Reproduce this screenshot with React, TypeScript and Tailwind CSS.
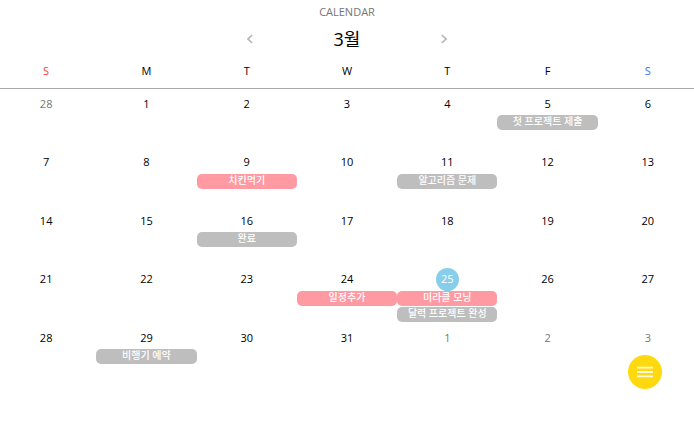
type Tone = "pink" | "gray";

interface Day {
  date: number;
  outside?: boolean;
  today?: boolean;
  events?: { title: string; tone: Tone }[];
}

const weekdays = [
  { label: "S", name: "Sunday", color: "text-[#ff3b3b]" },
  { label: "M", name: "Monday", color: "text-black" },
  { label: "T", name: "Tuesday", color: "text-black" },
  { label: "W", name: "Wednesday", color: "text-black" },
  { label: "T", name: "Thursday", color: "text-black" },
  { label: "F", name: "Friday", color: "text-black" },
  { label: "S", name: "Saturday", color: "text-[#3b6dff]" },
];

const events: Record<number, Day["events"]> = {
  5: [{ title: "첫 프로젝트 제출", tone: "gray" }],
  9: [{ title: "치킨먹기", tone: "pink" }],
  11: [{ title: "알고리즘 문제", tone: "gray" }],
  16: [{ title: "완료", tone: "gray" }],
  24: [{ title: "일정추가", tone: "pink" }],
  25: [
    { title: "미라클 모닝", tone: "pink" },
    { title: "달력 프로젝트 완성", tone: "gray" },
  ],
  29: [{ title: "비행기 예약", tone: "gray" }],
};

const days: Day[] = [
  { date: 28, outside: true },
  ...Array.from({ length: 31 }, (_, i) => ({
    date: i + 1,
    today: i + 1 === 25,
    events: events[i + 1],
  })),
  { date: 1, outside: true },
  { date: 2, outside: true },
  { date: 3, outside: true },
];

const tones: Record<Tone, string> = {
  pink: "bg-[#ff99a2]",
  gray: "bg-[#bebebe]",
};

function Chevron({ d }: { d: string }) {
  return (
    <svg viewBox="0 0 6 10" className="h-[10px] w-[6px]" fill="none" stroke="#b4b4b4" strokeWidth="1.6">
      <path d={d} />
    </svg>
  );
}

function DayCell({ day }: { day: Day }) {
  const color = day.today
    ? "bg-[#87ceeb] text-white"
    : day.outside
      ? "text-[#757575]"
      : "text-black";
  return (
    <div className="flex min-w-0 flex-col items-center">
      <span className={`flex size-[23px] shrink-0 items-center justify-center rounded-full ${color}`}>
        {day.date}
      </span>
      <div className="flex w-full flex-col gap-px">
        {day.events?.map((event) => (
          <button
            key={event.title}
            type="button"
            className={`h-[15px] w-full rounded-[5px] text-center text-[10px] leading-[13px] font-medium whitespace-nowrap text-white ${tones[event.tone]}`}
          >
            <span className="block h-[15px]">{event.title}</span>
          </button>
        ))}
      </div>
    </div>
  );
}

export default function App() {
  return (
    <main className="min-h-screen overflow-hidden bg-white font-['Open_Sans','Noto_Sans_CJK_KR',sans-serif] text-[11px] leading-4 text-black">
      <header className="flex flex-col items-center pt-1">
        <h1 className="text-[#757575]">CALENDAR</h1>
        <div className="mt-1 flex h-[30px] w-[206px] items-center justify-between">
          <button type="button" aria-label="Previous month" className="flex w-3 justify-center">
            <Chevron d="M5.2 1 1 5l4.2 4" />
          </button>
          <h2 className="text-lg">3월</h2>
          <button type="button" aria-label="Next month" className="flex w-3 justify-center">
            <Chevron d="M.8 1 5 5 .8 9" />
          </button>
        </div>
      </header>
      <div className="-mx-1 grid grid-cols-7 border-b border-[#a9a9a9] pt-[9px] pb-[9px] text-center">
        {weekdays.map((weekday) => (
          <abbr key={weekday.name} title={weekday.name} className={`no-underline ${weekday.color}`}>
            {weekday.label}
          </abbr>
        ))}
      </div>
      <section className="-mx-1 mt-[3px] grid h-[293px] auto-rows-fr grid-cols-7">
        {days.map((day, i) => (
          <DayCell key={i} day={day} />
        ))}
      </section>
      <button
        type="button"
        aria-label="Menu"
        className="fixed right-8 bottom-[45px] flex size-[34px] items-center justify-center rounded-full bg-[#ffd90f]"
      >
        <svg viewBox="0 0 16 12" className="h-3 w-4" stroke="#fffbe0" strokeWidth="1.8">
          <path d="M0 1.7h16M0 6h16M0 10.3h16" />
        </svg>
      </button>
    </main>
  );
}
